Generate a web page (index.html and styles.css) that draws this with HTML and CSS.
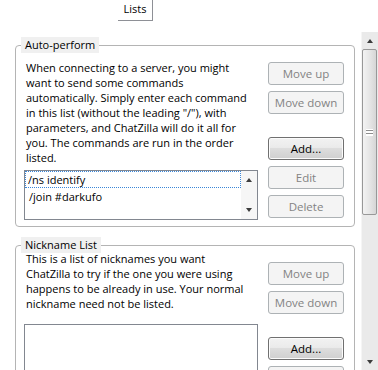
FILE: index.html
```html
<!DOCTYPE html>
<html lang="en">
<head>
    <meta charset="UTF-8">
    <title>Lists</title>
    <link rel="stylesheet" href="styles.css">
</head>
<body>
    <div class="tabbar">
        <span class="tab">Lists</span>
    </div>

    <div class="page">
        <div class="panel">
            <div class="group group-auto">
                <span class="caption">Auto-perform</span>
                <div class="group-main">
                    <p class="desc">
                        When connecting to a server, you might<br>
                        want to send some commands<br>
                        automatically. Simply enter each command<br>
                        in this list (without the leading "/"), with<br>
                        parameters, and ChatZilla will do it all for<br>
                        you. The commands are run in the order<br>
                        listed.
                    </p>
                    <div class="listbox">
                        <ul class="items">
                            <li class="item focused">/ns identify</li>
                            <li class="item">/join #darkufo</li>
                        </ul>
                        <div class="lb-scroll">
                            <span class="arrow up"></span>
                            <span class="arrow down"></span>
                        </div>
                    </div>
                </div>
                <div class="buttons">
                    <button class="btn" disabled>Move up</button>
                    <button class="btn" disabled>Move down</button>
                    <button class="btn add">Add...</button>
                    <button class="btn" disabled>Edit</button>
                    <button class="btn" disabled>Delete</button>
                </div>
            </div>

            <div class="group group-nick">
                <span class="caption">Nickname List</span>
                <div class="group-main">
                    <p class="desc">
                        This is a list of nicknames you want<br>
                        ChatZilla to try if the one you were using<br>
                        happens to be already in use. Your normal<br>
                        nickname need not be listed.
                    </p>
                    <div class="listbox tall">
                        <ul class="items"></ul>
                    </div>
                </div>
                <div class="buttons">
                    <button class="btn" disabled>Move up</button>
                    <button class="btn" disabled>Move down</button>
                    <button class="btn add">Add...</button>
                    <button class="btn" disabled>Edit</button>
                </div>
            </div>
        </div>

        <div class="scrollbar">
            <div class="sb-button"><span class="arrow up"></span></div>
            <div class="sb-thumb"><span class="grip"></span></div>
            <div class="sb-track"></div>
            <div class="sb-button"><span class="arrow down"></span></div>
        </div>
    </div>
</body>
</html>
```

FILE: styles.css
```css
body {
    margin: 0;
    width: 378px;
    height: 370px;
    overflow: hidden;
    background-color: #ffffff;
    color: #000000;
    font-family: "Open Sans", "Noto Sans", sans-serif;
    font-size: 11px;
}

/* tab strip */
.tabbar {
    height: 21px;
}
.tab {
    display: block;
    margin-left: 118px;
    width: 35px;
    height: 21px;
    line-height: 18px;
    text-align: center;
    border-right: 1px solid #8e9096;
    border-bottom: 1px solid #8e9096;
    box-sizing: border-box;
}

.page {
    display: flex;
}
.panel {
    width: 361px;
    padding-left: 15px;
    box-sizing: border-box;
}

/* group boxes */
.group {
    position: relative;
    display: flex;
    align-items: flex-start;
    gap: 10px;
    width: 340px;
    box-sizing: border-box;
    border: 1px solid #b4b4b4;
    border-radius: 4px;
    padding: 0 9px 6px 8px;
}
.group-auto {
    margin-top: 24px;
    padding-top: 14px;
}
.group-nick {
    margin-top: 18px;
    padding-top: 5px;
}
.caption {
    position: absolute;
    top: -9px;
    left: 5px;
    height: 16px;
    line-height: 16px;
    padding: 0 4px;
    background-color: #f0f0f0;
}

.group-main {
    width: 234px;
}
.desc {
    margin: 0;
    padding-left: 2px;
    line-height: 15px;
    white-space: nowrap;
}

/* list boxes */
.listbox {
    display: flex;
    height: 50px;
    margin-top: 5px;
    border: 1px solid #828790;
    box-sizing: border-box;
}
.group-nick .listbox {
    margin-top: 13px;
}
.listbox.tall {
    height: 70px;
}
.items {
    flex: 1;
    margin: 0;
    padding: 0;
    list-style: none;
}
.item {
    height: 17px;
    line-height: 15px;
    padding-left: 2px;
    border: 1px solid transparent;
    box-sizing: border-box;
}
.item + .item {
    padding-left: 3px;
}
.item.focused {
    border: 1px dotted #3a86d8;
}
.lb-scroll {
    width: 16px;
    display: flex;
    flex-direction: column;
    justify-content: space-between;
    align-items: center;
    padding: 7px 0 7px;
    background-color: #f6f6f6;
}

/* buttons */
.buttons {
    display: flex;
    flex-direction: column;
    gap: 6px;
    margin-top: 2px;
}
.group-nick .buttons {
    margin-top: 11px;
}
.btn {
    width: 76px;
    height: 23px;
    padding: 0;
    font: inherit;
    font-size: 11.5px;
    color: #000000;
    border: 1px solid #707070;
    border-radius: 3px;
    background: linear-gradient(#f2f2f2, #ebebeb 45%, #dddddd 50%, #cfcfcf);
    box-shadow: inset 0 0 0 1px #fbfbfb;
}
.btn:disabled {
    color: #838383;
    border-color: #adb2b5;
    background: #f4f4f4;
    box-shadow: none;
}
.btn.add {
    margin-top: 17px;
}

/* arrows */
.arrow {
    display: block;
    width: 0;
    height: 0;
    border-left: 3.5px solid transparent;
    border-right: 3.5px solid transparent;
}
.arrow.up {
    border-bottom: 4px solid #3c3c3c;
}
.arrow.down {
    border-top: 4px solid #3c3c3c;
}

/* page scrollbar */
.scrollbar {
    display: flex;
    flex-direction: column;
    width: 17px;
    height: 338px;
    margin-top: 11px;
    background-color: #eaeaea;
    border-left: 1px solid #f5f5f5;
    box-sizing: border-box;
}
.sb-button {
    height: 17px;
    display: flex;
    align-items: center;
    justify-content: center;
    flex-shrink: 0;
}
.sb-thumb {
    height: 166px;
    margin: 0 1px 0 0;
    border: 1px solid #989898;
    border-radius: 2px;
    box-sizing: border-box;
    background: linear-gradient(to right, #f3f3f3, #e6e6e6 50%, #d6d6d6);
    display: flex;
    align-items: center;
    justify-content: center;
    flex-shrink: 0;
}
.grip {
    width: 7px;
    height: 7px;
    background: repeating-linear-gradient(#ffffff 0, #ffffff 1px, #8e8e8e 1px, #8e8e8e 2px, #ffffff 2px, #ffffff 3px);
}
.sb-track {
    flex: 1;
}
```
